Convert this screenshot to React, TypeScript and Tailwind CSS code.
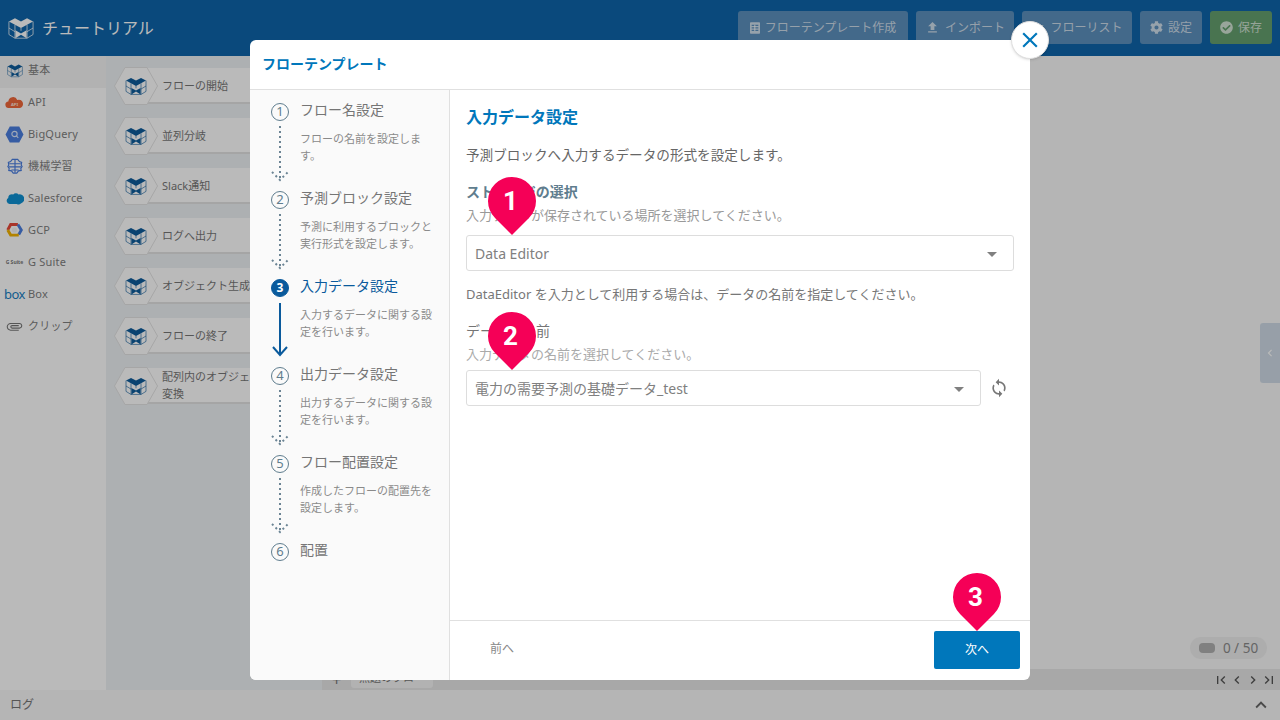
import React from 'react';
import { FaCheckCircle, FaCog } from 'react-icons/fa';
import {
  MdAttachFile,
  MdChevronLeft,
  MdChevronRight,
  MdClose,
  MdExpandLess,
  MdFileUpload,
  MdFirstPage,
  MdLastPage,
  MdList,
  MdSync,
} from 'react-icons/md';

const font = '[font-family:"Noto_Sans","Noto_Sans_CJK_JP",sans-serif]';

const palette = [
  'フローの開始',
  '並列分岐',
  'Slack通知',
  'ログへ出力',
  'オブジェクト生成',
  'フローの終了',
];

const steps = [
  { no: 1, title: 'フロー名設定', desc: 'フローの名前を設定します。' },
  { no: 2, title: '予測ブロック設定', desc: '予測に利用するブロックと実行形式を設定します。' },
  { no: 3, title: '入力データ設定', desc: '入力するデータに関する設定を行います。', active: true },
  { no: 4, title: '出力データ設定', desc: '出力するデータに関する設定を行います。' },
  { no: 5, title: 'フロー配置設定', desc: '作成したフローの配置先を設定します。' },
  { no: 6, title: '配置', desc: '' },
];

function Cube({ className }: { className?: string }) {
  return (
    <svg viewBox="0 0 28 26" className={className}>
      <path d="M1 6 7.5 2.5 14 6l6.5-3.5L27 6l-6.5 3.5L14 13 7.5 9.5Z" fill="currentColor" />
      <path
        d="M1 6v14l6.5 4h13l6.5-4V6M1 13l6.5 4M27 13l-6.5 4M7.5 9.5V24M20.5 9.5V24M14 13v3"
        fill="none"
        stroke="currentColor"
        strokeWidth="0.8"
      />
      <path d="M8 15.5 14 19l6-3.500V24l-6-3.800L8 24Z" fill="currentColor" />
    </svg>
  );
}

function TemplateIcon() {
  return (
    <svg viewBox="0 0 12 14" className="h-[12px] w-[10px]">
      <path
        d="M1 0h10a1 1 0 0 1 1 1v12a1 1 0 0 1-1 1H1a1 1 0 0 1-1-1V1a1 1 0 0 1 1-1Zm1 3v1.500h8V3Zm0 3v1.500h8V6Zm0 3v1.500h8V9Z"
        fill="currentColor"
        fillRule="evenodd"
      />
      <path d="M5 3h1.500v7.500H5Z" fill="currentColor" />
    </svg>
  );
}

function ApiIcon() {
  return (
    <svg viewBox="0 0 20 14" className="h-[13px] w-[19px]">
      <path
        d="M4 13a3.500 3.500 0 0 1-.6-7A5 5 0 0 1 13 4.200 4.500 4.500 0 0 1 16 13Z"
        fill="#f0673a"
      />
      <text x="10" y="11" textAnchor="middle" fontSize="4.500" fontWeight="700" fill="#ffe6dc">
        API
      </text>
    </svg>
  );
}

function BigQueryIcon() {
  return (
    <svg viewBox="0 0 20 18" className="h-[17px] w-[19px]">
      <path d="M5 .5h10l4.500 8.500-4.500 8.500H5L.5 9Z" fill="#4a7ee0" />
      <circle cx="10" cy="8.500" r="2.800" fill="none" stroke="#dbe6fa" strokeWidth="1.200" />
      <path d="m12 10.500 2 2" stroke="#dbe6fa" strokeWidth="1.200" />
    </svg>
  );
}

function BrainIcon() {
  return (
    <svg viewBox="0 0 18 18" className="h-[16px] w-[16px]" fill="none" stroke="#4a7ee0" strokeWidth="1.300">
      <path d="M6 1.500h6l2 2.500 2.500 1-.5 3 1 1.500-1.500 2.500.5 2-3 .5-2 2.500H7l-2-2.500-3-.5.500-2L1 9.500l1-1.500-.5-3L4 4Z" />
      <path d="M2.500 6.500h13M2 10h14M5 13.500h8M9 1.500v15" />
    </svg>
  );
}

function SalesforceIcon() {
  return (
    <svg viewBox="0 0 20 14" className="h-[13px] w-[18px]">
      <path
        d="M4 13a3.500 3.500 0 0 1-1.500-6.500A4 4 0 0 1 8 2.500a4 4 0 0 1 6 0 4.500 4.500 0 0 1 2.500 10A3.500 3.500 0 0 1 12 13Z"
        fill="#0f91d2"
      />
    </svg>
  );
}

function GcpIcon() {
  return (
    <svg viewBox="0 0 20 18" className="h-[16px] w-[17px]" fill="none" strokeWidth="3.400">
      <path d="M2 9 5.500 2.500H14" stroke="#e8493a" />
      <path d="M14 2.500 18 9l-3 5.500" stroke="#4a7ee0" />
      <path d="M15 15H5.500L2 9" stroke="#f4b400" />
      <circle cx="10" cy="9" r="3" fill="#f3f3f3" stroke="none" />
    </svg>
  );
}

function SideIcon({ name }: { name: string }) {
  if (name === '基本') return <Cube className="h-[15px] w-[16px] text-[#0e5c9c]" />;
  if (name === 'API') return <ApiIcon />;
  if (name === 'BigQuery') return <BigQueryIcon />;
  if (name === '機械学習') return <BrainIcon />;
  if (name === 'Salesforce') return <SalesforceIcon />;
  if (name === 'GCP') return <GcpIcon />;
  if (name === 'G Suite') return <span className="text-[5px] leading-none font-bold text-[#777]">G Suite</span>;
  if (name === 'Box') return <span className="text-[13px] leading-none tracking-[-0.5px] text-[#1a7fc4]">box</span>;
  return <MdAttachFile className="h-[17px] w-[17px] rotate-90 text-[#777]" />;
}

const sideItems = ['基本', 'API', 'BigQuery', '機械学習', 'Salesforce', 'GCP', 'G Suite', 'Box', 'クリップ'];

function PaletteItem({ children }: { children: React.ReactNode }) {
  return (
    <div className="flex h-[38px] w-[198px] items-center">
      <div className="relative z-10 flex h-[38px] w-[44px] shrink-0 items-center justify-center">
        <svg viewBox="0 0 44 38" className="absolute inset-0 h-[38px] w-[44px]">
          <path d="M11 .5h22L43.500 19 33 37.500H11L.5 19Z" fill="#fff" stroke="#e4e4e4" />
        </svg>
        <Cube className="relative h-[20px] w-[22px] text-[#0e5c9c]" />
      </div>
      <div className="-ml-[11px] flex h-[36px] flex-1 items-center border-b-2 border-[#e2e2e2] bg-white pl-[15px] text-[11px] leading-[17px] text-[#777]">
        <span>{children}</span>
      </div>
    </div>
  );
}

function Connector({ active }: { active?: boolean }) {
  if (active) {
    return (
      <svg viewBox="0 0 18 54" className="mt-[6px] h-[54px] w-[18px] text-[#0a5a9c]" fill="none" stroke="currentColor" strokeWidth="2">
        <path d="M9 0v52M2 44l7 8 7-8" />
      </svg>
    );
  }
  return (
    <svg viewBox="0 0 18 58" className="mt-[5px] h-[58px] w-[18px] text-[#6b8494]" fill="none" stroke="currentColor" strokeWidth="2" strokeDasharray="2 3">
      <path d="M9 0v54M1 46l8 8 8-8" />
    </svg>
  );
}

function Step({ no, title, desc, active }: { no: number; title: string; desc: string; active?: boolean }) {
  return (
    <div className="flex h-[88px] pl-[21px]">
      <div className="flex w-[18px] shrink-0 flex-col items-center pt-[3px]">
        <div
          className={
            active
              ? 'flex h-[18px] w-[18px] shrink-0 items-center justify-center rounded-full border border-[#0a5a9c] bg-[#0a5a9c] text-[12px] font-bold text-white'
              : 'flex h-[18px] w-[18px] shrink-0 items-center justify-center rounded-full border border-[#5f7d8e] text-[13px] text-[#5f7d8e]'
          }
        >
          {no}
        </div>
        {no < 6 && <Connector active={active} />}
      </div>
      <div className="ml-[11px] w-[136px]">
        <div className={active ? 'text-[14px] leading-[20px] text-[#0a5a9c]' : 'text-[14px] leading-[20px] text-[#757575]'}>{title}</div>
        {desc && <div className="mt-[10px] text-[11px] leading-[17px] text-[#8a8a8a]">{desc}</div>}
      </div>
    </div>
  );
}

function Pin({ n, className }: { n: number; className: string }) {
  return (
    <div className={`absolute z-20 h-[48px] w-[48px] ${className}`}>
      <div className="absolute inset-0 rotate-45 rounded-full rounded-br-none bg-[#f50057]" />
      <div className="relative flex h-full items-center justify-center pt-[1px] pr-[3px] font-['Roboto',sans-serif] text-[26px] font-bold text-white">{n}</div>
    </div>
  );
}

function Caret() {
  return <div className="mt-[2px] h-0 w-0 border-x-[5px] border-t-[5px] border-x-transparent border-t-[#808080]" />;
}

function TopButton({ icon, label, className }: { icon: React.ReactNode; label: string; className: string }) {
  return (
    <button className={`flex h-[33px] items-center justify-center gap-[5px] rounded-[3px] text-[12px] text-white/70 ${className}`}>
      {icon}
      {label}
    </button>
  );
}

export default function App() {
  return (
    <div className={`relative flex h-screen w-[1280px] flex-col overflow-hidden bg-[#f8f8f8] ${font}`}>
      <header className="flex h-14 shrink-0 items-center justify-between bg-[#0e65aa] pr-2 pl-2">
        <div className="flex items-center gap-[8px]">
          <Cube className="h-[26px] w-[26px] text-white" />
          <span className="text-[16px] text-white">チュートリアル</span>
        </div>
        <div className="-mt-[1px] flex items-center gap-2">
          <TopButton className="w-[170px] bg-[#5d90bd]" icon={<TemplateIcon />} label="フローテンプレート作成" />
          <TopButton className="w-[98px] bg-[#5d90bd]" icon={<MdFileUpload className="h-[15px] w-[15px]" />} label="インポート" />
          <TopButton className="w-[110px] bg-[#5d90bd]" icon={<MdList className="h-[14px] w-[14px]" />} label="フローリスト" />
          <TopButton className="w-[62px] bg-[#5d90bd]" icon={<FaCog className="h-[13px] w-[13px]" />} label="設定" />
          <TopButton className="w-[62px] bg-[#65a06e]" icon={<FaCheckCircle className="h-[13px] w-[13px]" />} label="保存" />
        </div>
      </header>

      <div className="flex min-h-0 flex-1">
        <aside className="w-[106px] shrink-0 bg-white">
          {sideItems.map((name, i) => (
            <div key={name} className={i === 0 ? 'flex h-8 items-center bg-[#f4f4f4] pb-[4px]' : 'flex h-8 items-center pb-[4px]'}>
              <div className="flex w-[28px] shrink-0 justify-center pl-[1px]">
                <SideIcon name={name} />
              </div>
              <span className="text-[11px] tracking-[0.2px] text-[#808080]">{name}</span>
            </div>
          ))}
        </aside>

        <div className="flex w-[216px] shrink-0 flex-col gap-3 overflow-hidden bg-[#edf1f4] pt-[11px] pl-2">
          {palette.map((p) => (
            <PaletteItem key={p}>{p}</PaletteItem>
          ))}
          <PaletteItem>
            配列内のオブジェクト
            <br />
            変換
          </PaletteItem>
        </div>

        <div className="relative flex flex-1 flex-col">
          <div className="flex-1" />
          <div className="absolute right-[13px] bottom-[31px] flex h-[22px] w-[77px] items-center justify-center gap-[8px] rounded-full bg-[#eeeeee]">
            <div className="h-[10px] w-[16px] rounded-[4px] bg-[#b0b0b0]" />
            <span className="text-[13.5px] text-[#8a8a8a]">0 / 50</span>
          </div>
          <div className="absolute top-[267px] right-0 flex h-[60px] w-[20px] items-center justify-center rounded-l-[3px] bg-[#d0dbe6] text-white">
            <MdChevronLeft className="h-[14px] w-[14px]" />
          </div>
          <div className="flex h-[21px] shrink-0 items-center bg-[#e6e6e6] pr-[3px]">
            <span className="w-[29px] text-center text-[16px] text-[#777]">+</span>
            <div className="flex h-[19px] w-[82px] items-center justify-center self-start rounded-b-[3px] bg-[#f4f4f4] text-[11px] text-[#777]">無題のフロー</div>
            <div className="flex-1" />
            <div className="flex items-center text-[#555]">
              <MdFirstPage className="h-4 w-4" />
              <MdChevronLeft className="h-4 w-4" />
              <MdChevronRight className="h-4 w-4" />
              <MdLastPage className="h-4 w-4" />
            </div>
          </div>
        </div>
      </div>

      <footer className="flex h-[30px] shrink-0 items-center justify-between bg-[#f8f8f8] pr-[8px] pl-[10px]">
        <span className="text-[12px] text-[#777]">ログ</span>
        <MdExpandLess className="h-[22px] w-[22px] text-[#666]" />
      </footer>

      <div className="absolute inset-0 z-40 flex items-center justify-center bg-black/[0.27]">
        <div className="relative flex h-[640px] w-[780px] flex-col rounded-md bg-white">
          <button className="absolute -top-[19px] -right-[19px] z-30 flex h-[38px] w-[38px] items-center justify-center rounded-full border border-[#e0e0e0] bg-white text-[#0077bb] shadow-sm">
            <MdClose className="h-[26px] w-[26px]" />
          </button>

          <div className="flex h-[50px] shrink-0 items-center border-b border-[#e0e0e0] pb-[2px] pl-3 text-[14px] font-bold text-[#0077bb]">フローテンプレート</div>

          <div className="flex min-h-0 flex-1">
            <div className="w-[200px] shrink-0 rounded-bl-md border-r border-[#e0e0e0] bg-[#fafafa] pt-[10px]">
              {steps.map((s) => (
                <Step key={s.no} {...s} />
              ))}
            </div>

            <div className="flex min-w-0 flex-1 flex-col">
              <div className="relative flex-1 px-4 pt-[15px]">
                <h2 className="text-[16px] leading-[24px] font-bold text-[#0077bb]">入力データ設定</h2>
                <p className="mt-[16px] text-[13.6px] leading-[20px] text-[#666]">予測ブロックへ入力するデータの形式を設定します。</p>

                <h3 className="mt-[17px] text-[14px] leading-[20px] font-bold text-[#5f7d8e]">ストレージの選択</h3>
                <p className="mt-[4px] text-[13px] leading-[18px] text-[#999]">入力データが保存されている場所を選択してください。</p>
                <div className="mt-[11px] flex h-[36px] items-center justify-between rounded-[3px] border border-[#ddd] pr-[16px] pl-2 text-[14px] text-[#808080]">
                  Data Editor
                  <Caret />
                </div>

                <p className="mt-[13px] text-[13px] leading-[20px] text-[#777]">DataEditor を入力として利用する場合は、データの名前を指定してください。</p>

                <h3 className="mt-[17px] text-[14px] leading-[20px] text-[#757575]">データの名前</h3>
                <p className="mt-[4px] text-[13px] leading-[18px] text-[#aaa]">入力データの名前を選択してください。</p>
                <div className="mt-[7px] flex items-center">
                  <div className="flex h-[36px] w-[515px] items-center justify-between rounded-[3px] border border-[#ddd] pr-[16px] pl-2 text-[14px] text-[#808080]">
                    電力の需要予測の基礎データ_test
                    <Caret />
                  </div>
                  <MdSync className="ml-[8px] h-[20px] w-[20px] text-[#777]" />
                </div>

                <Pin n={1} className="top-[87px] left-[38px]" />
                <Pin n={2} className="top-[222px] left-[38px]" />
                <Pin n={3} className="top-[483px] left-[503px]" />
              </div>

              <div className="flex h-[60px] shrink-0 items-center justify-between border-t border-[#e0e0e0] pr-[10px] pl-[40px]">
                <span className="-mt-[3px] text-[12px] text-[#888]">前へ</span>
                <button className="-mt-[1px] h-[38px] w-[86px] rounded-[2px] bg-[#0077bb] text-[12px] text-white">次へ</button>
              </div>
            </div>
          </div>
        </div>
      </div>
    </div>
  );
}
